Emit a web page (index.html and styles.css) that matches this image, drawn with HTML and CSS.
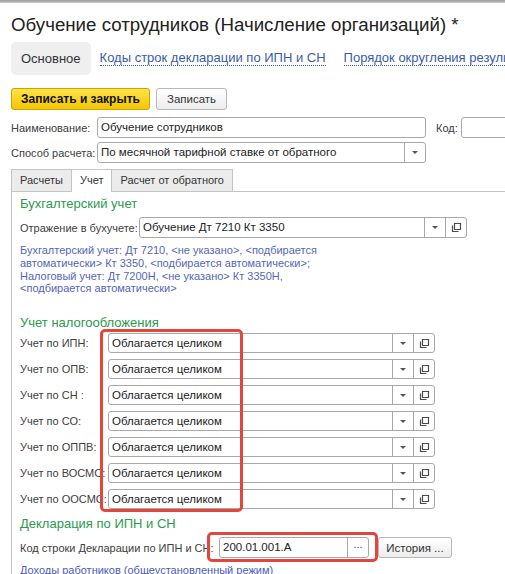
FILE: index.html
```html
<!DOCTYPE html>
<html>
	<head>
		<meta charset="utf-8">
		<title>Обучение сотрудников</title>
		<link rel="stylesheet" href="styles.css">
	</head>
	<body>
		<div class="topline"></div>
		<div class="page">
			<h1 class="title">Обучение сотрудников (Начисление организаций) *</h1>

			<div class="nav">
				<span class="nav-current">Основное</span>
				<a class="nav-link" href="##">Коды строк декларации по ИПН и СН</a>
				<a class="nav-link" href="##">Порядок округления результата</a>
			</div>

			<div class="toolbar">
				<button class="btn btn-main">Записать и закрыть</button>
				<button class="btn">Записать</button>
			</div>

			<div class="row">
				<label class="lbl lbl-head">Наименование:</label>
				<div class="field f-name"><span class="val">Обучение сотрудников</span></div>
				<label class="lbl lbl-code">Код:</label>
				<div class="field f-code"><span class="val"></span></div>
			</div>
			<div class="row">
				<label class="lbl lbl-head">Способ расчета:</label>
				<div class="field f-way">
					<span class="val">По месячной тарифной ставке от обратного</span>
					<span class="fbtn"><i class="arrow"></i></span>
				</div>
			</div>

			<div class="tabs">
				<span class="tab">Расчеты</span>
				<span class="tab tab-on">Учет</span>
				<span class="tab">Расчет от обратного</span>
			</div>

			<div class="panel">
				<h3 class="group">Бухгалтерский учет</h3>
				<div class="row">
					<label class="lbl lbl-acc">Отражение в бухучете:</label>
					<div class="field f-acc">
						<span class="val">Обучение Дт 7210 Кт 3350</span>
						<span class="fbtn"><i class="arrow"></i></span>
						<span class="fbtn"><svg class="copy" width="11" height="11" viewBox="0 0 11 11"><path d="M3.5 1.5h6v6h-6z M1.5 3.5v6h6" fill="none" stroke="#4a4a4a" stroke-width="1.2"/></svg></span>
					</div>
				</div>
				<p class="note">Бухгалтерский учет: Дт 7210, &lt;не указано&gt;, &lt;подбирается<br>автоматически&gt; Кт 3350, &lt;подбирается автоматически&gt;;<br>Налоговый учет: Дт 7200Н, &lt;не указано&gt; Кт 3350Н,<br>&lt;подбирается автоматически&gt;</p>

				<h3 class="group group-tax">Учет налогообложения</h3>
				<div class="tax">
					<div class="row tax-row">
						<label class="lbl lbl-tax">Учет по ИПН:</label>
						<div class="field f-tax"><span class="val">Облагается целиком</span><span class="fbtn"><i class="arrow"></i></span><span class="fbtn"><svg class="copy" width="11" height="11" viewBox="0 0 11 11"><path d="M3.5 1.5h6v6h-6z M1.5 3.5v6h6" fill="none" stroke="#4a4a4a" stroke-width="1.2"/></svg></span></div>
					</div>
					<div class="row tax-row">
						<label class="lbl lbl-tax">Учет по ОПВ:</label>
						<div class="field f-tax"><span class="val">Облагается целиком</span><span class="fbtn"><i class="arrow"></i></span><span class="fbtn"><svg class="copy" width="11" height="11" viewBox="0 0 11 11"><path d="M3.5 1.5h6v6h-6z M1.5 3.5v6h6" fill="none" stroke="#4a4a4a" stroke-width="1.2"/></svg></span></div>
					</div>
					<div class="row tax-row">
						<label class="lbl lbl-tax">Учет по СН :</label>
						<div class="field f-tax"><span class="val">Облагается целиком</span><span class="fbtn"><i class="arrow"></i></span><span class="fbtn"><svg class="copy" width="11" height="11" viewBox="0 0 11 11"><path d="M3.5 1.5h6v6h-6z M1.5 3.5v6h6" fill="none" stroke="#4a4a4a" stroke-width="1.2"/></svg></span></div>
					</div>
					<div class="row tax-row">
						<label class="lbl lbl-tax">Учет по СО:</label>
						<div class="field f-tax"><span class="val">Облагается целиком</span><span class="fbtn"><i class="arrow"></i></span><span class="fbtn"><svg class="copy" width="11" height="11" viewBox="0 0 11 11"><path d="M3.5 1.5h6v6h-6z M1.5 3.5v6h6" fill="none" stroke="#4a4a4a" stroke-width="1.2"/></svg></span></div>
					</div>
					<div class="row tax-row">
						<label class="lbl lbl-tax">Учет по ОППВ:</label>
						<div class="field f-tax"><span class="val">Облагается целиком</span><span class="fbtn"><i class="arrow"></i></span><span class="fbtn"><svg class="copy" width="11" height="11" viewBox="0 0 11 11"><path d="M3.5 1.5h6v6h-6z M1.5 3.5v6h6" fill="none" stroke="#4a4a4a" stroke-width="1.2"/></svg></span></div>
					</div>
					<div class="row tax-row">
						<label class="lbl lbl-tax">Учет по ВОСМС:</label>
						<div class="field f-tax"><span class="val">Облагается целиком</span><span class="fbtn"><i class="arrow"></i></span><span class="fbtn"><svg class="copy" width="11" height="11" viewBox="0 0 11 11"><path d="M3.5 1.5h6v6h-6z M1.5 3.5v6h6" fill="none" stroke="#4a4a4a" stroke-width="1.2"/></svg></span></div>
					</div>
					<div class="row tax-row">
						<label class="lbl lbl-tax">Учет по ООСМС:</label>
						<div class="field f-tax"><span class="val">Облагается целиком</span><span class="fbtn"><i class="arrow"></i></span><span class="fbtn"><svg class="copy" width="11" height="11" viewBox="0 0 11 11"><path d="M3.5 1.5h6v6h-6z M1.5 3.5v6h6" fill="none" stroke="#4a4a4a" stroke-width="1.2"/></svg></span></div>
					</div>
					<div class="mark mark-tax"></div>
				</div>

				<h3 class="group group-decl">Декларация по ИПН и СН</h3>
				<div class="row">
					<label class="lbl lbl-decl">Код строки Декларации по ИПН и СН:</label>
					<div class="decl">
						<div class="field f-decl"><span class="val">200.01.001.A</span><span class="fbtn dots">...</span></div>
						<div class="mark mark-decl"></div>
					</div>
					<button class="btn btn-hist">История ...</button>
				</div>
				<a class="link-income" href="##">Доходы работников (общеустановленный режим)</a>
			</div>
		</div>
	</body>
</html>
```

FILE: styles.css
```css
*{
	margin: 0;
	padding: 0;
	box-sizing: border-box;
}
html,body{
	overflow: hidden;
}
body{
	background: #fff;
	font-family: "Liberation Sans", Arial, sans-serif;
	font-size: 11px;
	color: #404040;
}
.topline{
	height: 3px;
	background: linear-gradient(#9a9a9a, #c8c8c8);
}
.page{
	width: 600px;
	padding-left: 11px;
}
.title{
	font-size: 18.7px;
	font-weight: normal;
	color: #222;
	line-height: 22px;
	margin-top: 11px;
	white-space: nowrap;
}

/* вкладки формы */
.nav{
	display: flex;
	align-items: center;
	margin-top: 6px;
	white-space: nowrap;
}
.nav-current{
	background: #efefef;
	border-radius: 5px;
	height: 33px;
	line-height: 33px;
	padding: 0 10px;
	font-size: 13px;
	color: #333;
}
.nav-link{
	margin-left: 9px;
	margin-right: 9px;
	font-size: 13px;
	color: #3a5ba8;
	text-decoration: none;
	border-bottom: 1px dotted #3a5ba8;
	line-height: 14px;
}

/* кнопки */
.toolbar{
	display: flex;
	gap: 6px;
	margin-top: 13px;
}
.btn{
	height: 22px;
	padding: 0 10px;
	font-family: inherit;
	font-size: 11.5px;
	color: #333;
	background: linear-gradient(#fff, #ececec);
	border: 1px solid #b8b8b8;
	border-radius: 3px;
}
.btn-main{
	background: linear-gradient(#ffe34a, #f3c600);
	border-color: #c9a500;
	color: #111;
	font-size: 12px;
	font-weight: bold;
	padding: 0 9px;
}

/* поля */
.row{
	display: flex;
	align-items: center;
	white-space: nowrap;
}
.lbl{
	flex: none;
	overflow: hidden;
}
.field{
	display: flex;
	height: 21px;
	border: 1px solid #a8a8a8;
	border-radius: 3px;
	background: #fff;
	overflow: hidden;
}
.val{
	flex: 1;
	padding-left: 3px;
	line-height: 19px;
	color: #222;
	font-size: 11.5px;
	overflow: hidden;
}
.fbtn{
	width: 21px;
	flex: none;
	border-left: 1px solid #a8a8a8;
	display: flex;
	align-items: center;
	justify-content: center;
}
.arrow{
	width: 0;
	height: 0;
	border-left: 3px solid transparent;
	border-right: 3px solid transparent;
	border-top: 3px solid #555;
}
.lbl-head{
	width: 86px;
}
.row + .row{
	margin-top: 4px;
}
.toolbar + .row{
	margin-top: 7px;
}
.f-name{
	width: 329px;
}
.lbl-code{
	margin-left: 10px;
	width: 25px;
}
.f-code{
	width: 60px;
}
.f-way{
	width: 329px;
}

/* закладки */
.tabs{
	display: flex;
	margin-top: 6px;
	height: 22px;
	position: relative;
	z-index: 1;
}
.tab{
	height: 22px;
	line-height: 21px;
	padding: 0 8px;
	background: #ececec;
	border: 1px solid #c4c4c4;
	border-bottom: none;
	color: #333;
	font-size: 11px;
}
.tab + .tab{
	margin-left: -1px;
}
.tab-on{
	background: #fff;
	height: 23px;
}
.panel{
	border-left: 1px solid #c4c4c4;
	border-top: 1px solid #c4c4c4;
	padding: 3px 0 0 8px;
	height: 400px;
}
.group{
	font-size: 13px;
	font-weight: normal;
	color: #2b9a4c;
	line-height: 18px;
}
.lbl-acc{
	width: 119px;
	margin-top: 4px;
}
.f-acc{
	width: 328px;
	margin-top: 4px;
}
.note{
	margin-top: 6px;
	color: #5566b8;
	font-size: 11px;
	line-height: 12.8px;
}
.group-tax{
	margin-top: 19px;
}
.tax{
	position: relative;
	margin-top: 1px;
}
.tax-row + .tax-row{
	margin-top: 6px;
}
.lbl-tax{
	width: 88px;
	padding-right: 4px;
}
.f-tax{
	width: 327px;
	height: 20px;
}
.f-tax .val{
	line-height: 18px;
}
.mark{
	position: absolute;
	border: 3px solid #e2463d;
	border-radius: 5px;
	pointer-events: none;
}
.mark-tax{
	left: 80px;
	top: -4px;
	width: 143px;
	height: 183px;
}
.group-decl{
	margin-top: 6px;
}
.lbl-decl{
	width: 199px;
	margin-top: 4px;
}
.decl{
	position: relative;
	margin-top: 4px;
}
.f-decl{
	width: 150px;
	height: 21px;
}
.dots{
	font-size: 11px;
	line-height: 19px;
	align-items: flex-end;
	padding-bottom: 3px;
}
.mark-decl{
	left: -12px;
	top: -5px;
	right: -9px;
	bottom: -4px;
}
.btn-hist{
	margin-left: 9px;
	margin-top: 4px;
	width: 74px;
	height: 21px;
	padding: 0;
}
.link-income{
	display: inline-block;
	margin-top: 6px;
	color: #4a5cb8;
	text-decoration: none;
	border-bottom: 1px solid #9aa4d8;
	line-height: 13px;
}
```
